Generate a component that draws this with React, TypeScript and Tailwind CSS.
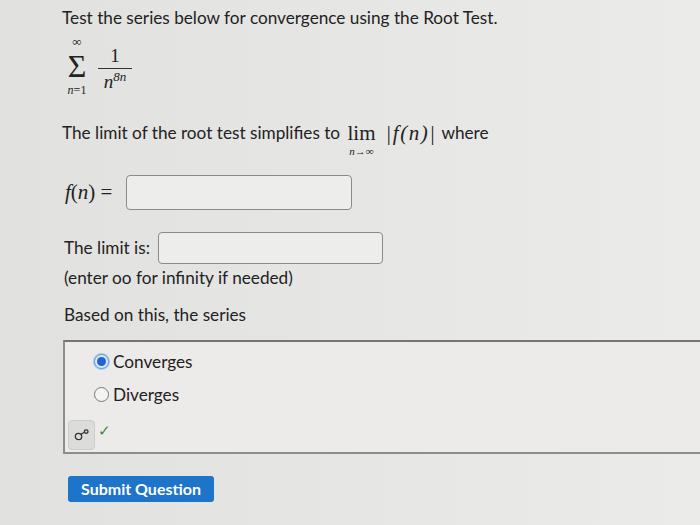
import React from "react";

const math = { fontFamily: '"Liberation Serif", "DejaVu Serif", serif' };

function Radio({ checked, label }: { checked: boolean; label: string }) {
  return (
    <label className="flex h-[33px] items-center gap-[4px]">
      <span
        className={`flex h-[15px] w-[15px] items-center justify-center rounded-full border ${
          checked ? "border-[#5b9be0] bg-[#dfe9f5] shadow-[0_0_0_1px_#a9c8ee]" : "border-[#777] bg-[#f4f4f2]"
        }`}
      >
        {checked ? <span className="h-[9px] w-[9px] rounded-full bg-[#1f63d6]" /> : null}
      </span>
      <span className="text-[17.2px] text-[#222]">{label}</span>
    </label>
  );
}

function KeyIcon() {
  return (
    <svg width="16" height="12" viewBox="0 0 16 12" fill="none" stroke="#333" strokeWidth="1.3">
      <circle cx="4.5" cy="7.5" r="3.2" />
      <path d="M7 5.3 L10.5 3.2" />
      <circle cx="12.2" cy="2.6" r="1.8" />
    </svg>
  );
}

export default function App() {
  return (
    <div
      className="h-[525px] w-[700px] overflow-hidden bg-gradient-to-r from-[#e1e1df] to-[#ebebe9] text-[#222]"
      style={{ fontFamily: 'Lato, "Open Sans", sans-serif' }}
    >
      <div className="pl-[62px] pt-[6px]">
        <p className="text-[17.2px] leading-[24px]">Test the series below for convergence using the Root Test.</p>

        {/* series */}
        <div className="mt-[6px] flex items-start" style={math}>
          <div className="flex w-[30px] flex-col items-center">
            <span className="text-[13px] leading-[12px]">∞</span>
            <span className="text-[32px] leading-[36px]">Σ</span>
            <span className="text-[12px] italic leading-[12px]">
              n<span className="not-italic">=1</span>
            </span>
          </div>
          <div className="ml-[6px] mt-[10px] flex flex-col items-center">
            <span className="text-[19px] leading-[20px]">1</span>
            <span className="mt-[2px] h-px w-[34px] bg-[#333]" />
            <span className="mt-[2px] text-[19px] italic leading-[22px]">
              n<span className="relative -top-[7px] text-[13px]">8n</span>
            </span>
          </div>
        </div>

        <div className="mt-[25px] flex items-start text-[17.2px]">
          <span className="leading-[24px]">The limit of the root test simplifies to&nbsp;</span>
          <span className="ml-[3px] flex flex-col items-center" style={math}>
            <span className="text-[21px] leading-[24px]">lim</span>
            <span className="text-[11px] italic leading-[12px]">n→∞</span>
          </span>
          <span className="ml-[10px] text-[21px] italic leading-[24px] tracking-[1.5px]" style={math}>
            |f(n)|
          </span>
          <span className="ml-[5px] leading-[24px]">where</span>
        </div>

        <div className="mt-[18px] flex items-center">
          <span className="ml-[3px] text-[21px]" style={math}>
            <i>f</i>(<i>n</i>) =
          </span>
          <div className="ml-[14px] h-[35px] w-[226px] rounded-[4px] border border-[#8a8a88] bg-[#ededeb]" />
        </div>

        <div className="mt-[22px] flex items-center">
          <span className="ml-[2px] text-[17.2px]">The limit is:</span>
          <div className="ml-[8px] h-[32px] w-[225px] rounded-[4px] border border-[#8a8a88] bg-[#ededeb]" />
        </div>
        <p className="ml-[2px] mt-[2px] text-[17.2px] leading-[24px]">(enter oo for infinity if needed)</p>
        <p className="ml-[2px] mt-[13px] text-[17.2px] leading-[24px]">Based on this, the series</p>
      </div>

      <div className="ml-[63px] mt-[13px] border-y-2 border-l-2 border-[#8d8d8b] border-t-[#747472] bg-[#ecebe9] pb-[2px] pl-[3px] pt-[3px]">
        <div className="ml-[26px]">
          <Radio checked label="Converges" />
          <Radio checked={false} label="Diverges" />
        </div>
        <div className="mt-[9px] flex items-start gap-[3px]">
          <div className="flex h-[30px] w-[27px] items-center justify-center rounded-[4px] border border-[#cdcdcb] bg-[#dcdcda]">
            <KeyIcon />
          </div>
          <span className="mt-[1px] text-[15px] leading-[18px] text-[#3f8a3f]">✓</span>
        </div>
      </div>

      <div className="ml-[68px] mt-[22px]">
        <button className="h-[26px] rounded-[3px] bg-[#1d74c9] px-[13px] text-[16px] font-bold leading-[26px] text-white">
          Submit Question
        </button>
      </div>
    </div>
  );
}
